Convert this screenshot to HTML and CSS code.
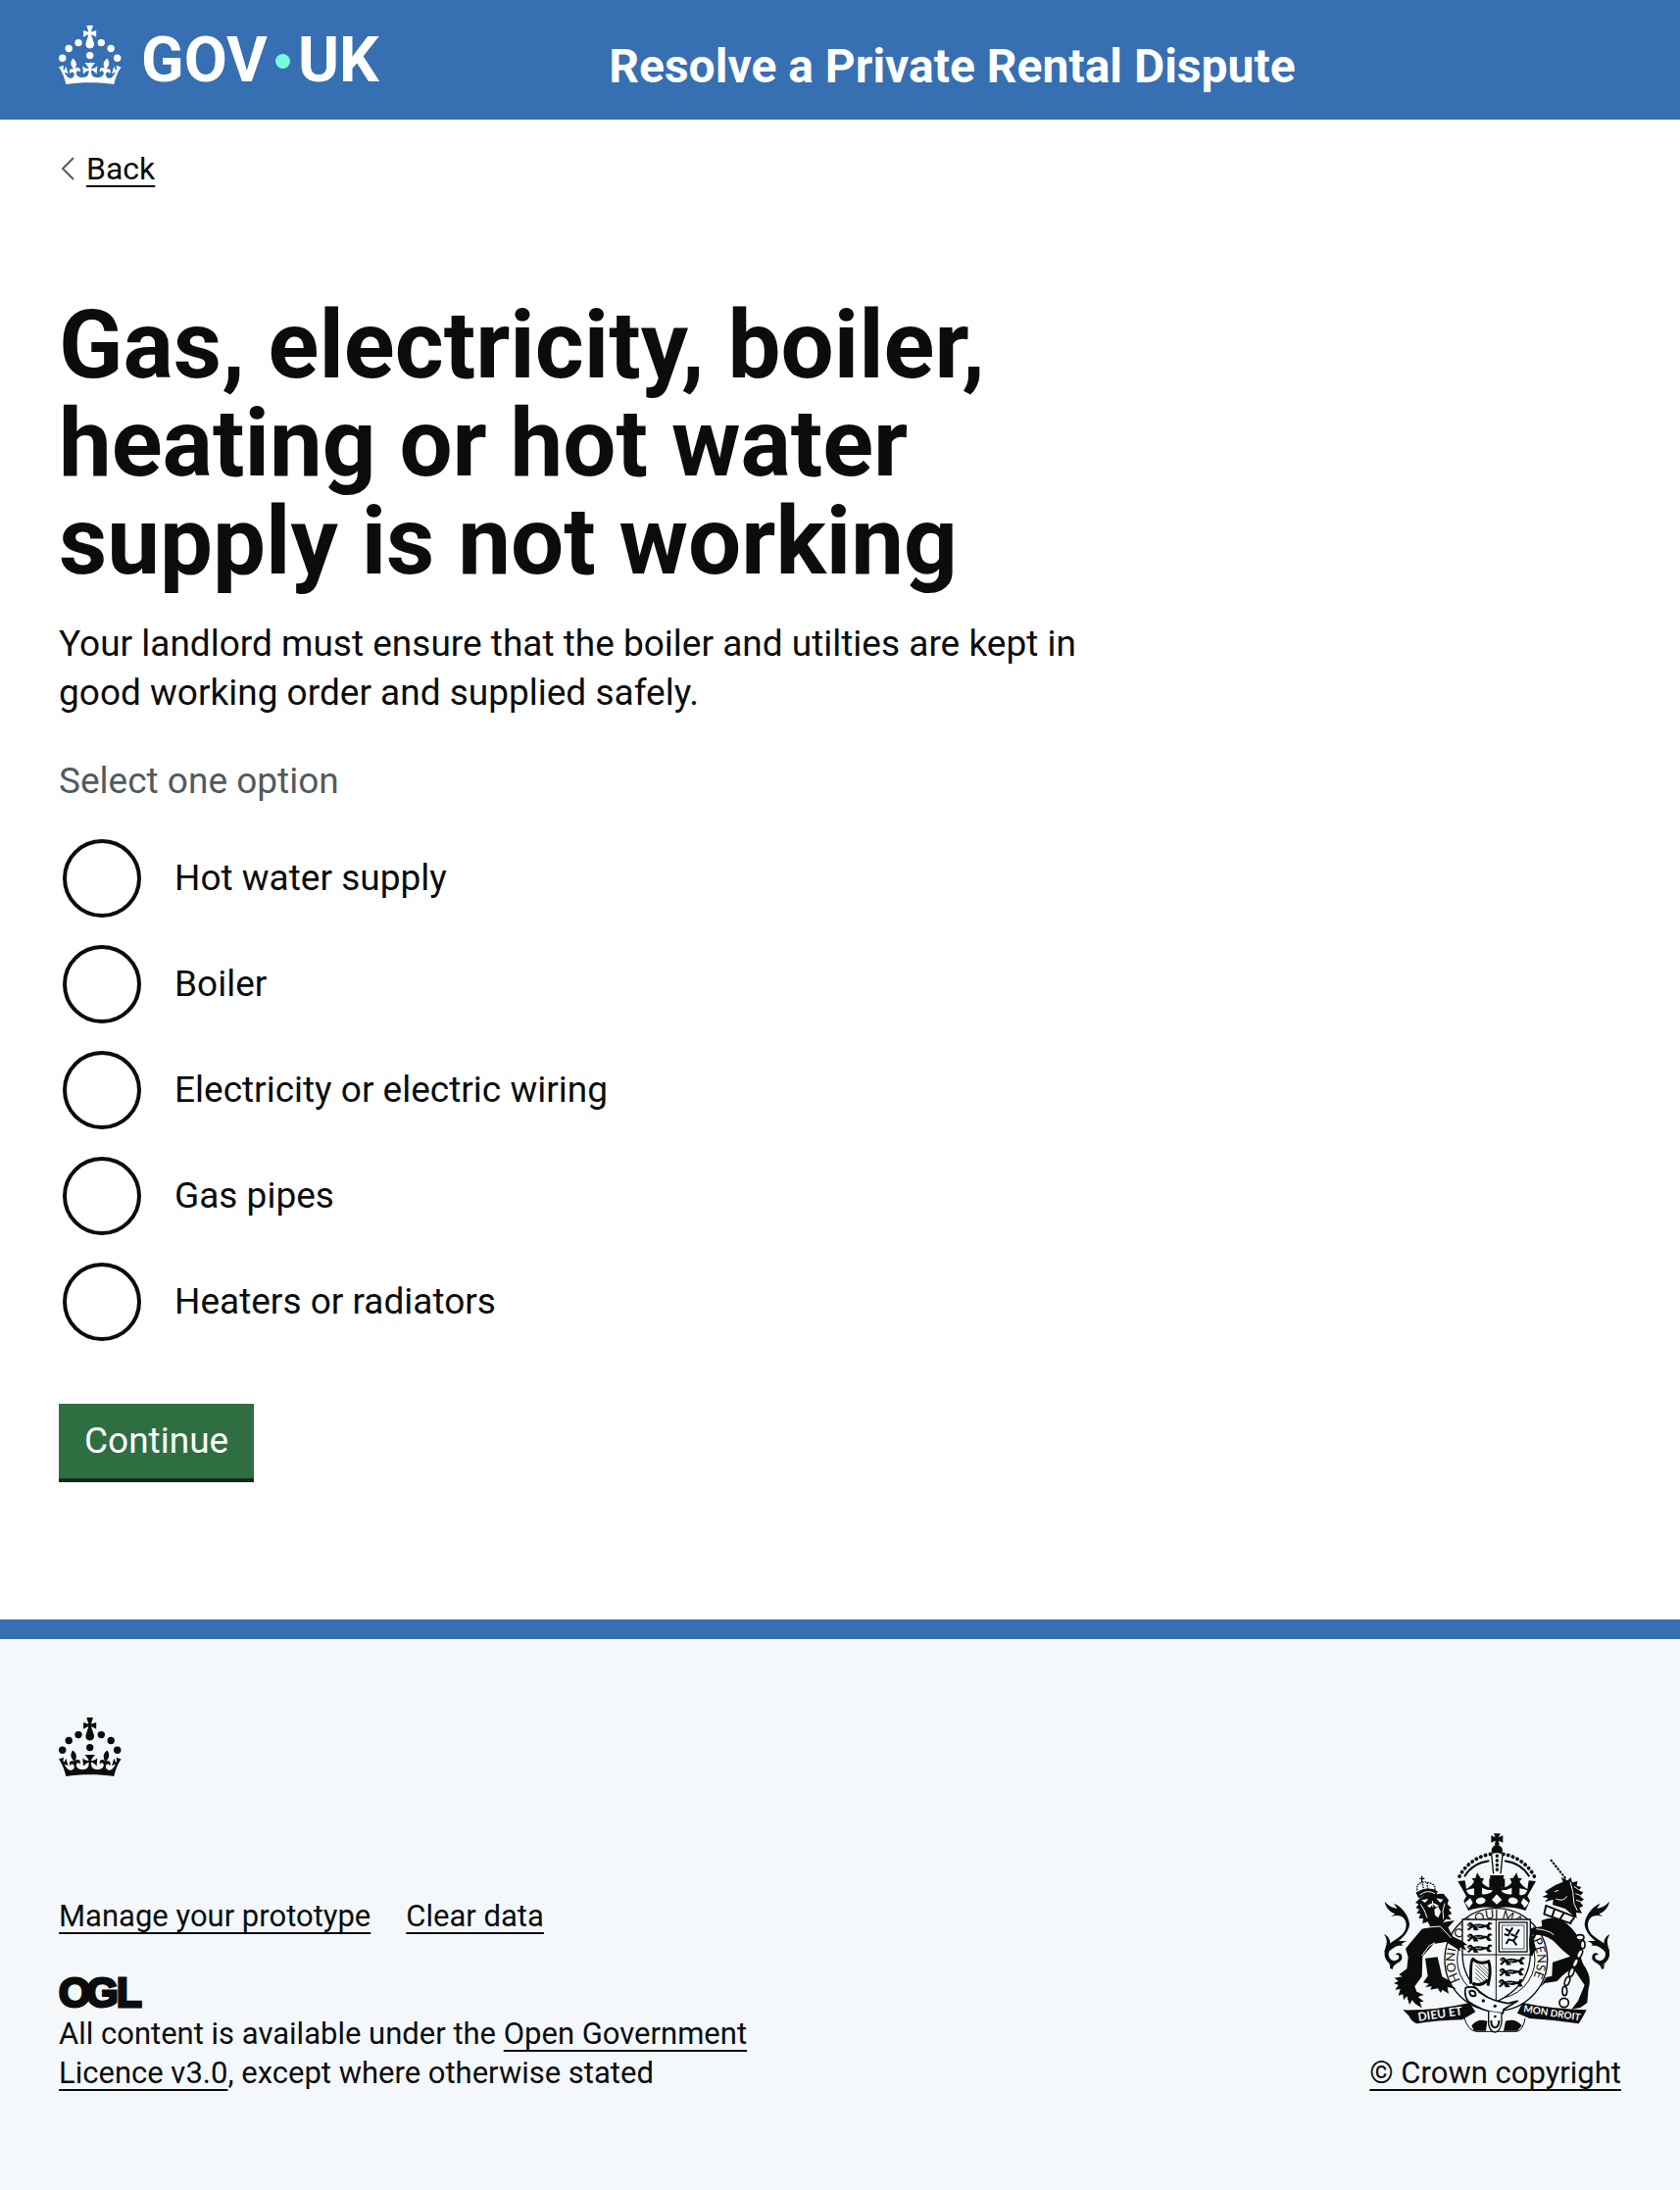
FILE: index.html
```html
<!DOCTYPE html>
<html lang="en">
<head>
<meta charset="utf-8">
<meta name="viewport" content="width=device-width, initial-scale=1">
<title>Gas, electricity, boiler, heating or hot water supply is not working</title>
<link rel="stylesheet" href="styles.css">
</head>
<body>
<svg class="defs" width="0" height="0" aria-hidden="true">
  <symbol id="crown" viewBox="0 0 64 60">
    <circle cx="20" cy="17.6" r="3.7"/><circle cx="10.2" cy="23.5" r="3.7"/><circle cx="3.7" cy="33.2" r="3.7"/><circle cx="31.7" cy="30.6" r="3.7"/><circle cx="43.3" cy="17.6" r="3.7"/><circle cx="53.2" cy="23.5" r="3.7"/><circle cx="59.7" cy="33.2" r="3.7"/>
    <path d="M33.1,9.8c.2-.1.3-.3.5-.5l4.6,2.4v-6.8l-4.6,1.5c-.1-.2-.3-.3-.5-.5l1.9-5.9h-6.7l1.9,5.9c-.2.1-.3.3-.5.5l-4.6-1.5v6.8l4.6-2.4c.1.2.3.3.5.5l-2.6,8c-.9,2.8,1.2,5.7,4.1,5.7h0c3,0,5.1-2.9,4.1-5.7l-2.6-8ZM37,37.9s-3.4,3.8-4.1,6.1c2.2,0,4.2-.5,6.4-2.8l-.7,8.5c-2-2.8-4.4-4.1-5.7-3.8.1,3.1.5,6.7,5.8,7.2,3.7.3,6.7-1.5,7-3.8.4-2.6-2-4.3-3.7-1.6-1.4-4.5,2.4-6.1,4.9-3.2-1.9-4.5-1.8-7.7,2.4-10.9,3,4,2.6,7.3-1.2,11.1,2.4-1.3,6.2,0,4,4.6-1.2-2.8-3.7-2.2-4.2.2-.3,1.7.7,3.7,3,4.2,1.9.3,4.7-.9,7-5.9-1.3,0-2.4.7-3.9,1.7l2.4-8c.6,2.3,1.4,3.7,2.2,4.5.6-1.6.5-2.8,0-5.3l5,1.8c-2.6,3.6-5.2,8.7-7.3,17.5-7.4-1.1-15.7-1.7-24.5-1.7h0c-8.8,0-17.1.6-24.5,1.7-2.1-8.9-4.7-13.9-7.3-17.5l5-1.8c-.5,2.5-.6,3.7,0,5.3.8-.8,1.6-2.3,2.2-4.5l2.4,8c-1.5-1-2.6-1.7-3.9-1.7,2.3,5,5.2,6.2,7,5.9,2.3-.4,3.3-2.4,3-4.2-.5-2.4-3-3.1-4.2-.2-2.2-4.6,1.6-6,4-4.6-3.7-3.7-4.2-7.1-1.2-11.1,4.2,3.2,4.3,6.4,2.4,10.9,2.5-2.8,6.3-1.3,4.9,3.2-1.8-2.7-4.1-1-3.7,1.6.3,2.3,3.3,4.1,7,3.8,5.4-.5,5.7-4.2,5.8-7.2-1.3-.2-3.7,1-5.7,3.8l-.7-8.5c2.2,2.3,4.2,2.7,6.4,2.8-.7-2.3-4.1-6.1-4.1-6.1h10.6Z"/>
  </symbol>
</svg>

<header class="header">
  <div class="container header-row">
    <a class="logo" href="#" aria-label="GOV.UK">
      <svg class="crown" width="64" height="60" aria-hidden="true"><use href="#crown"/></svg>
      <span class="logo-word">GOV</span><span class="logo-dot"></span><span class="logo-word">UK</span>
    </a>
    <a class="service" href="#">Resolve a Private Rental Dispute</a>
  </div>
</header>

<div class="container page">
  <a class="back" href="#"><svg class="chevron" width="14" height="24" viewBox="0 0 14 24" aria-hidden="true"><path d="M13 1 2 12l11 11" fill="none" stroke="#505a5f" stroke-width="2"/></svg><span class="back-text">Back</span></a>
  <main class="main">
    <form class="column" action="#">
      <h1>Gas, electricity, boiler, heating or hot water supply is not working</h1>
      <p class="lead">Your landlord must ensure that the boiler and utilties are kept in good working order and supplied safely.</p>
      <fieldset class="options" aria-describedby="hint">
        <p class="hint" id="hint">Select one option</p>
        <div class="option"><input type="radio" name="issue" id="o1"><label for="o1">Hot water supply</label></div>
        <div class="option"><input type="radio" name="issue" id="o2"><label for="o2">Boiler</label></div>
        <div class="option"><input type="radio" name="issue" id="o3"><label for="o3">Electricity or electric wiring</label></div>
        <div class="option"><input type="radio" name="issue" id="o4"><label for="o4">Gas pipes</label></div>
        <div class="option"><input type="radio" name="issue" id="o5"><label for="o5">Heaters or radiators</label></div>
      </fieldset>
      <button class="button" type="button">Continue</button>
    </form>
  </main>
</div>

<footer class="footer">
  <div class="container">
    <svg class="crown" width="64" height="60" aria-hidden="true"><use href="#crown"/></svg>
    <div class="footer-row">
      <div class="footer-meta">
        <nav class="footer-links"><a class="link" href="#">Manage your prototype</a><a class="link" href="#">Clear data</a></nav>
        <svg class="ogl" width="84" height="34" viewBox="0 0 84 34" aria-hidden="true"><text class="ogl-text" x="0 28 59" y="32">OGL</text></svg>
        <p class="licence">All content is available under the <a class="link" href="#">Open Government Licence v3.0</a>, except where otherwise stated</p>
      </div>
      <div class="copyright">
        <svg class="arms" width="232" height="206" viewBox="84 30 696 618" aria-hidden="true">
          <defs>
            <g id="tail">
              <path d="M122 440C98 432 84 408 96 386C112 356 158 354 158 312C156 290 138 280 112 288L124 280C108 274 96 262 92 242C104 256 116 260 130 264C128 258 124 254 120 248C142 256 166 282 168 312C164 356 108 372 104 402C104 420 120 430 134 418C140 408 132 402 124 406C134 392 150 404 144 420C136 432 118 432 116 450L108 446C110 440 108 436 104 432Z"/>
              <path d="M90 398C98 374 104 362 90 342C106 350 112 364 108 380ZM112 380C118 362 134 362 160 364C140 370 142 376 150 378C130 376 122 380 106 396Z"/>
            </g>
            <g id="halfcrown">
              <path d="M416 97C372 104 334 134 318 172" fill="none" stroke="currentColor" stroke-width="11" stroke-linecap="round" stroke-dasharray="1 14"/>
              <path d="M412 118C378 122 352 140 336 166" fill="none" stroke="currentColor" stroke-width="6"/>
              <path d="M316 180L338 178L342 204Q362 192 366 180L358 172L370 170L375 154L386 170L396 172L390 184Q398 196 420 202L424 188L414 178L416 162H436V262Q390 254 348 270L334 240L342 226Z"/>
              <path class="paper" d="M342 208Q348 226 366 222L366 202Q354 204 342 208ZM390 200V220Q414 222 424 208Q404 208 390 200ZM338 246L354 232L362 246L350 262Z"/>
              <ellipse class="paper" cx="386" cy="240" rx="15" ry="10" transform="rotate(-8 386 240)"/>
            </g>
            <g id="passant">
              <path d="M0 10Q5 0 14 3L20 9Q36 4 52 9Q66 11 64 3Q76-1 78 8Q70 6 68 14L76 24L64 25L58 16Q40 24 30 17L36 26L22 27L17 17L6 27L0 23L9 17Z"/>
              <path d="M26 12Q34 16 44 12M4 9L12 12" fill="none" stroke="#f4f8fb" stroke-width="2"/>
            </g>
            <path id="motto" d="M324 483A126 126 0 1 1 496 529"/>
          </defs>
          <g fill="none" stroke="currentColor">
            <circle cx="433" cy="420" r="157" stroke-width="4" fill="#f4f8fb"/>
            <circle cx="433" cy="420" r="119" stroke-width="3"/>
          </g>
          <text class="motto-text"><textPath href="#motto">HONI SOIT QUI MAL Y PENSE</textPath></text>
          <!-- Crown -->
          <path d="M426 34H446L441 46L454 40V62L441 56L443 70H429L431 56L418 62V40L431 46Z"/>
          <circle cx="436" cy="86" r="17"/>
          <use href="#halfcrown"/>
          <use href="#halfcrown" transform="matrix(-1 0 0 1 871 0)"/>
          <path class="paper" d="M420 98Q436 88 452 98L448 160H424Z"/>
          <path d="M419 98L425 157M453 98L447 157" fill="none" stroke="currentColor" stroke-width="4"/>
          <path d="M436 102V156" stroke="currentColor" stroke-width="10" stroke-linecap="round" stroke-dasharray="1 13"/>
          <path d="M414 162H458L448 180L460 172V206L446 196L452 216H420L426 196L412 206V172L424 180Z"/>
          <path class="paper" d="M420 237L435 220L451 237L435 251Z"/>
          <!-- Shield -->
          <path d="M330 297H538V405Q536 500 433 550Q332 500 330 405Z" fill="#f4f8fb" stroke="currentColor" stroke-width="4"/>
          <path d="M433 297V550M330 405H538" stroke="currentColor" stroke-width="3"/>
          <use href="#passant" x="344" y="304"/><use href="#passant" x="344" y="338"/><use href="#passant" x="344" y="372"/>
          <use href="#passant" x="444" y="410"/><use href="#passant" x="442" y="444"/><use href="#passant" x="440" y="478"/>
          <g fill="none" stroke="currentColor">
            <rect x="442" y="306" width="86" height="90" stroke-width="4"/>
            <rect x="451" y="315" width="68" height="72" stroke-width="2"/>
            <path d="M462 326L476 334L470 346L458 342M476 334L484 322M478 342L496 350L486 362L496 376M486 362L472 358L464 372M494 344L504 328" stroke-width="6"/>
            <path d="M356 494Q354 424 362 418Q384 438 414 424M410 424Q420 454 408 500M362 492Q386 504 408 482" stroke-width="9"/>
            <path d="M370 436L410 476M370 448L408 486M370 460L402 492M380 436L412 468M392 436L412 456M370 474L388 490" stroke-width="2"/>
          </g>
          <!-- Lion -->
          <use href="#tail"/>
          <path d="M196 236L186 246L196 250L188 262L198 266L190 278L202 280L196 294L210 294L208 310L224 304L232 320L206 326L156 386L164 412L160 448L136 466L146 472L122 476L134 486L120 492L134 498L124 512L140 510L134 530L148 526L150 544L160 532L168 558L176 544L186 556L206 568L200 550L212 548L194 534L212 528L190 518L184 502L206 472L208 410L242 372L280 366L324 394L322 382L342 392L334 376L346 376L328 362L302 350L286 322L306 300L270 306L280 296L296 298L286 284L298 280L288 266L296 262L284 250L288 238L272 218L214 222Z"/>
          <path d="M216 416L254 412L268 472L300 490L292 496L312 510L284 504L288 524L268 512L264 522L254 508L232 512L236 502L216 504L228 494L210 490L224 470Z"/>
          <path class="paper" d="M204 238L226 234L216 246ZM250 232L272 236L262 246ZM222 254L240 246L258 254L250 260L240 250L230 262ZM244 266L256 258L264 274L256 292L246 284Z"/>
          <path class="white-line" d="M202 250L214 270L222 292M276 248L270 270L272 296M238 240L240 260M212 322L262 318L296 354M206 408L228 378L246 368"/>
          <g fill="none" stroke="currentColor" stroke-width="4">
            <path d="M190 216Q222 196 252 212L246 224Q220 212 198 230Z" fill="currentColor"/>
            <path d="M192 208Q188 188 206 184Q220 180 240 190Q250 198 244 208M208 188L212 208M222 184L224 206" stroke-dasharray="5 3"/>
            <path d="M206 164V184M199 172H214"/>
          </g>
          <path class="white-line" d="M200 222Q222 204 246 218"/>
          <!-- Unicorn -->
          <use href="#tail" transform="matrix(-1 0 0 1 872 0)"/>
          <path d="M600 114L646 172" fill="none" stroke="currentColor" stroke-width="6" stroke-dasharray="8 3"/>
          <path d="M582 212L614 192L638 182L632 168L652 178L662 168L666 184L682 180L680 194L694 198L686 208L700 214L690 226L702 236L690 244L700 256L688 262L696 278L678 276L680 294L644 264L606 252L608 236L582 244L592 232L574 228L592 220Z"/>
          <path class="white-line" d="M660 182L668 212L672 250L682 270M612 212L624 208M616 234Q640 244 650 226M672 196L686 206M676 218L692 224M678 238L692 242"/>
          <path d="M584 254L676 290M578 280L664 310M586 254L580 282M612 266L604 290M640 278L628 298M672 292L658 310" fill="none" stroke="currentColor" stroke-width="6"/>
          <path d="M572 300Q616 280 652 312Q684 340 694 376Q688 414 700 434Q728 472 716 508L712 552L692 566L664 572L684 546L704 498L670 448Q646 456 620 486L582 492L570 504L586 474L604 470L606 428L660 410L638 392L608 362Q580 342 544 344L556 390L540 410L534 360L540 324L574 318Z"/>
          <path class="white-line" d="M556 326Q590 328 610 344M668 446L690 396"/>
          <path d="M542 408L538 372L556 336" fill="none" stroke="currentColor" stroke-width="8"/>
          <g fill="#f4f8fb" stroke="currentColor" stroke-width="5">
            <ellipse cx="690" cy="352" rx="12" ry="8"/><ellipse cx="698" cy="374" rx="7" ry="12"/><ellipse cx="689" cy="402" rx="7" ry="14" transform="rotate(25 689 402)"/><ellipse cx="676" cy="430" rx="7" ry="14" transform="rotate(25 676 430)"/><ellipse cx="664" cy="458" rx="7" ry="14" transform="rotate(20 664 458)"/><ellipse cx="651" cy="486" rx="7" ry="14" transform="rotate(20 651 486)"/><ellipse cx="643" cy="516" rx="7" ry="14"/><circle cx="641" cy="552" r="14"/>
          </g>
          <!-- Ribbon and buckle -->
          <path d="M148 574Q250 576 352 552L370 580L330 604Q250 606 190 616Q174 610 166 592Z"/>
          <path d="M710 574Q610 572 514 552L498 584L536 600Q610 604 686 616L698 596Z"/>
          <path d="M336 598Q346 636 372 640H498Q516 634 522 600" fill="none" stroke="currentColor" stroke-width="3"/>
          <path d="M358 622Q376 598 406 608L402 638H366ZM512 622Q494 598 462 608L456 638H498Z"/>
          <path d="M340 506Q370 498 382 520Q420 548 470 554L500 546L456 572L454 584Q400 584 348 548Q334 530 340 506Z" fill="#f4f8fb" stroke="currentColor" stroke-width="5"/>
          <path d="M410 578V618Q416 642 430 642Q446 640 450 612V584" fill="#f4f8fb" stroke="currentColor" stroke-width="4"/>
          <path d="M418 606Q418 628 430 628Q442 626 442 606M352 516Q372 512 370 530Q352 536 352 516" fill="none" stroke="currentColor" stroke-width="6"/>
          <circle cx="394" cy="546" r="5"/><circle cx="430" cy="562" r="5"/><circle cx="430" cy="594" r="4"/>
          <g class="ribbon-text">
            <text class="dieu" x="196" y="608" transform="rotate(-8 196 608)">DIEU ET</text>
            <text class="droit" x="516" y="580" transform="rotate(9 516 580)">MON DROIT</text>
          </g>
        </svg>
        <a class="link" href="#">© Crown copyright</a>
      </div>
    </div>
  </div>
</footer>
</body>
</html>
```
FILE: styles.css
```css
* { box-sizing: border-box; }

html { background: #f4f8fb; }

body {
  margin: 0;
  background: #fff;
  color: #0b0c0c;
  font-family: Roboto, "Liberation Sans", sans-serif;
  font-size: 37px;
  line-height: 50px;
}

a { color: inherit; }

.defs { position: absolute; }

.container {
  max-width: 1920px;
  margin: 0 auto;
  padding: 0 60px;
}

/* Header */
.header {
  background: #366fb2;
  color: #fff;
}

.header-row {
  display: flex;
  gap: 30px;
  padding-top: 26px;
  padding-bottom: 24px;
}

.logo {
  flex: 0 0 33.33%;
  display: flex;
  height: 72px;
  color: #fff;
  text-decoration: none;
}

.crown { display: block; fill: currentColor; }

.logo-word {
  font-size: 64px;
  font-weight: 700;
  line-height: 72px;
}

.crown + .logo-word { margin-left: 20px; }

.logo-dot {
  width: 15px;
  height: 15px;
  margin: 29px 8px 0;
  border-radius: 50%;
  background: #75fbde;
}

.service {
  padding-top: 12px;
  color: #fff;
  font-size: 48px;
  font-weight: 700;
  line-height: 60px;
  text-decoration: none;
}

/* Page */
.page { padding-top: 30px; }

.back {
  display: flex;
  align-items: center;
  gap: 12px;
  width: fit-content;
  padding-left: 2px;
  font-size: 32px;
  line-height: 40px;
  text-decoration: none;
}

.back-text, .link {
  text-decoration: underline;
  text-decoration-thickness: 2px;
  text-underline-offset: 6px;
  text-decoration-skip-ink: none;
}

.main { padding: 110px 0 144px; }

.column { width: 66.66%; }

h1 {
  margin: 0 0 30px;
  font-size: 96px;
  font-weight: 700;
  line-height: 100px;
}

.lead { margin: 0 0 40px; }

.options {
  margin: 0;
  padding: 0;
  border: 0;
}

.hint {
  margin: 0 0 34px;
  color: #505a5f;
}

.option {
  display: flex;
  align-items: center;
  gap: 34px;
  margin-bottom: 28px;
  padding-left: 4px;
}

.option input {
  appearance: none;
  width: 80px;
  height: 80px;
  margin: 0;
  border: 4px solid #0b0c0c;
  border-radius: 50%;
  background: #fff;
}

.option input:checked { box-shadow: inset 0 0 0 16px #fff, inset 0 0 0 40px #0b0c0c; }

.button {
  display: block;
  margin-top: 36px;
  padding: 13px 26px;
  border: 0;
  background: #2f6e41;
  box-shadow: 0 4px 0 #112c1b;
  color: #fff;
  font: inherit;
}

/* Footer */
.footer {
  padding: 80px 0 99px;
  border-top: 20px solid #366fb2;
  background: #f4f8fb;
  font-size: 31px;
  line-height: 40px;
}

.footer-row {
  display: flex;
  justify-content: space-between;
  align-items: flex-end;
  gap: 60px;
  padding-top: 57px;
}

.footer-meta { flex: 0 1 740px; }

.footer-links {
  display: flex;
  flex-wrap: wrap;
  gap: 10px 36px;
  margin-bottom: 40px;
}

.ogl {
  display: block;
  margin-bottom: 6px;
  overflow: visible;
}

.ogl-text {
  font-family: "Liberation Sans", sans-serif;
  font-size: 42px;
  font-weight: 700;
  fill: currentColor;
  stroke: currentColor;
  stroke-width: 3px;
}

.licence { margin: 0; }

.copyright {
  display: flex;
  flex-direction: column;
  align-items: center;
  gap: 20px;
}

.arms { display: block; fill: currentColor; }
.paper { fill: #f4f8fb; }
.white-line { fill: none; stroke: #f4f8fb; stroke-width: 3px; }
.motto-text { font-family: Lato, sans-serif; font-size: 38px; }

.ribbon-text {
  font-family: Lato, sans-serif;
  font-weight: 700;
  fill: #f4f8fb;
}

.dieu { font-size: 36px; }
.droit { font-size: 30px; }

@media (max-width: 1000px) {
  .header-row, .footer-row { flex-direction: column; align-items: flex-start; }
  .column { width: 100%; }
}
```
